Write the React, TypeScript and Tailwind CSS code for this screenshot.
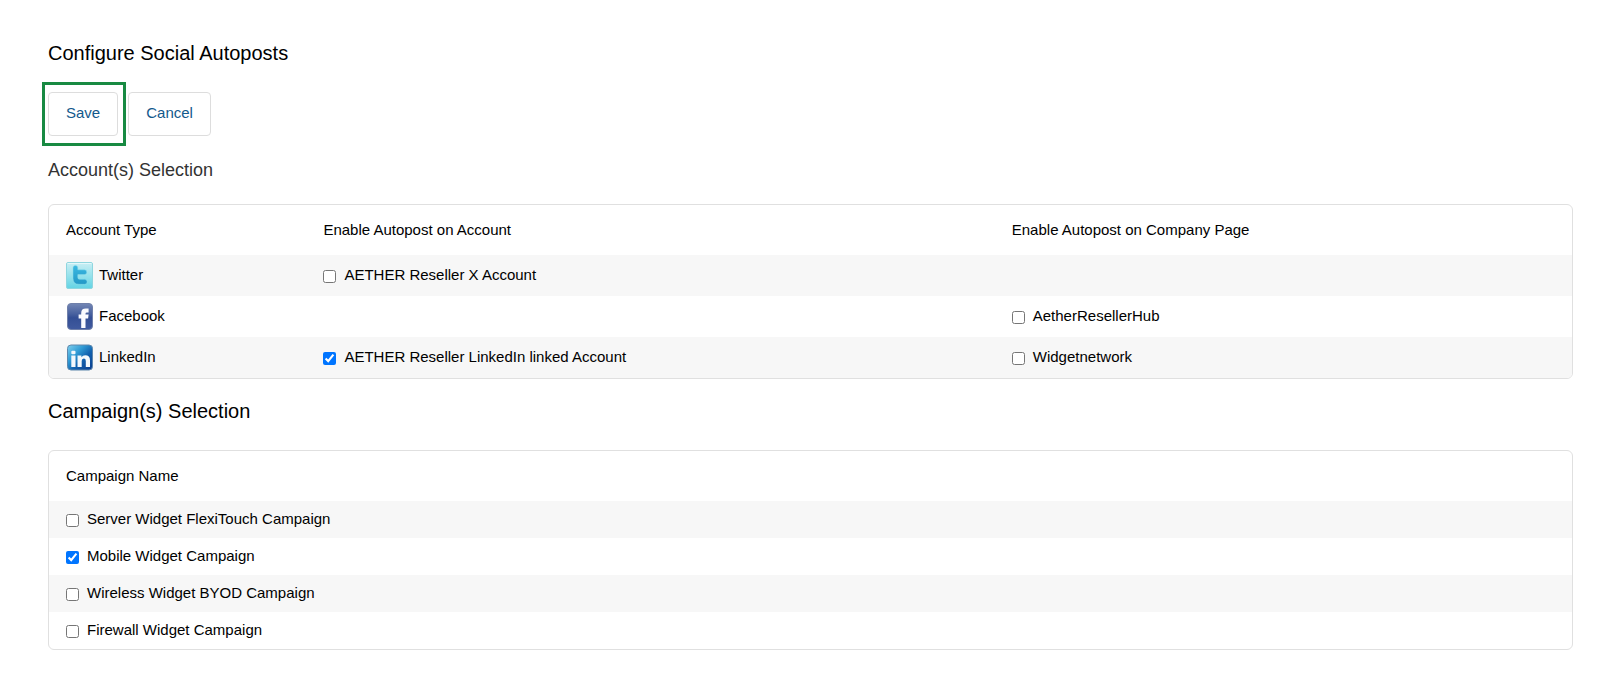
import { useState, type ReactNode } from 'react';

function TwitterIcon() {
  return (
    <svg viewBox="0 0 27 27" className="size-[27px] shrink-0" aria-hidden="true">
      <defs>
        <linearGradient id="tw-bg" x1="0" y1="0" x2="0" y2="1">
          <stop offset="0" stopColor="#c9eef4" />
          <stop offset="0.5" stopColor="#97e2ec" />
          <stop offset="1" stopColor="#62d3e4" />
        </linearGradient>
        <linearGradient id="tw-t" x1="0" y1="0" x2="0" y2="1">
          <stop offset="0" stopColor="#3bb9e2" />
          <stop offset="1" stopColor="#2398c6" />
        </linearGradient>
      </defs>
      <rect x="0.5" y="0.5" width="26" height="26" rx="1.5" fill="url(#tw-bg)" stroke="#8fd6df" />
      <path d="M1.5 1.5h24" stroke="#e3f7fa" />
      <path
        d="M7 5.8Q7 3.400 9.400 3.400Q11.800 3.400 11.800 5.800V7.800H18.400Q20.800 7.800 20.800 10.200Q20.800 12.600 18.400 12.600H11.800V15.400Q11.800 17.300 13.700 17.300H18.600Q21.100 17.300 21.100 19.800Q21.100 22.300 18.600 22.300H13Q7 22.300 7 16.300Z"
        fill="url(#tw-t)"
        stroke="#8bdcea"
        strokeWidth="0.5"
      />
    </svg>
  );
}

function FacebookIcon() {
  return (
    <svg viewBox="0 0 27 27" className="size-[27px] shrink-0" aria-hidden="true">
      <defs>
        <linearGradient id="fb-bg" x1="0" y1="0" x2="0" y2="1">
          <stop offset="0" stopColor="#7487b5" />
          <stop offset="0.4" stopColor="#48619f" />
          <stop offset="0.55" stopColor="#344f95" />
          <stop offset="1" stopColor="#405a9f" />
        </linearGradient>
      </defs>
      <rect x="1.5" y="0.5" width="25" height="26" rx="3.5" fill="url(#fb-bg)" stroke="#7080aa" />
      <path
        d="M15.200 25V15.600H12.600V11.600H15.200V10Q15.200 5.600 19.800 5.600H22.600V9.500H20.900Q19.500 9.500 19.500 10.800V11.600H22.600L22.100 15.600H19.500V25Z"
        fill="#fafbff"
      />
    </svg>
  );
}

function LinkedInIcon() {
  return (
    <svg viewBox="0 0 27 27" className="size-[27px] shrink-0" aria-hidden="true">
      <defs>
        <linearGradient id="li-bg" x1="0" y1="0" x2="1" y2="1">
          <stop offset="0" stopColor="#7fd0ee" />
          <stop offset="0.35" stopColor="#2f9ad4" />
          <stop offset="0.6" stopColor="#1261ae" />
          <stop offset="1" stopColor="#0a3b8c" />
        </linearGradient>
      </defs>
      <rect x="1.5" y="1" width="25" height="25" rx="3.5" fill="url(#li-bg)" stroke="#5f87ac" />
      <rect x="5.300" y="6.800" width="4.200" height="3.400" rx="1" fill="#f3f8fc" />
      <path
        d="M5.300 11.500H9.500V23H5.300ZM11.500 11.500H15.400V13.200Q16.700 11.200 19.200 11.200Q24 11.200 24 16.200V23H19.800V17Q19.800 14.600 17.800 14.600Q15.700 14.600 15.700 17.100V23H11.500Z"
        fill="#f3f8fc"
      />
    </svg>
  );
}

type Option = { id: string; label: string; checked: boolean };

type Account = {
  name: string;
  icon: ReactNode;
  account?: Option;
  page?: Option;
};

const accounts: Account[] = [
  {
    name: 'Twitter',
    icon: <TwitterIcon />,
    account: { id: 'twitter-account', label: 'AETHER Reseller X Account', checked: false },
  },
  {
    name: 'Facebook',
    icon: <FacebookIcon />,
    page: { id: 'facebook-page', label: 'AetherResellerHub', checked: false },
  },
  {
    name: 'LinkedIn',
    icon: <LinkedInIcon />,
    account: { id: 'linkedin-account', label: 'AETHER Reseller LinkedIn linked Account', checked: true },
    page: { id: 'linkedin-page', label: 'Widgetnetwork', checked: false },
  },
];

const campaigns: Option[] = [
  { id: 'server', label: 'Server Widget FlexiTouch Campaign', checked: false },
  { id: 'mobile', label: 'Mobile Widget Campaign', checked: true },
  { id: 'wireless', label: 'Wireless Widget BYOD Campaign', checked: false },
  { id: 'firewall', label: 'Firewall Widget Campaign', checked: false },
];

function CheckOption({ option }: { option: Option }) {
  const [checked, setChecked] = useState(option.checked);
  return (
    <label htmlFor={option.id} className="inline-flex items-center gap-2 align-middle">
      <input
        id={option.id}
        type="checkbox"
        checked={checked}
        onChange={(e) => setChecked(e.target.checked)}
        className="mt-[3px] size-[13px] shrink-0"
      />
      {option.label}
    </label>
  );
}

function Panel({ children }: { children: ReactNode }) {
  return (
    <div className="overflow-hidden rounded-md border border-[#e0e0e0]">
      <table className="w-full text-left">{children}</table>
    </div>
  );
}

export default function App() {
  return (
    <main className="bg-white pt-[39px] pr-[50px] pb-8 pl-12 font-['Liberation_Sans',Arial,sans-serif] text-[15px] leading-5 text-black">
      <h1 className="text-xl leading-7">Configure Social Autoposts</h1>

      <div className="mt-[25px] flex gap-2.5">
        <div className="relative">
          <button type="button" className="h-11 rounded border border-[#dddddd] px-[17px] pb-0.5 text-[#13598c]">
            Save
          </button>
          <span className="pointer-events-none absolute -top-2.5 -right-2 -bottom-2.5 -left-1.5 border-3 border-[#188a42]" />
        </div>
        <button type="button" className="h-11 rounded border border-[#dddddd] px-[17px] pb-0.5 text-[#13598c]">
          Cancel
        </button>
      </div>

      <h2 className="my-5 text-lg leading-7 text-[#333333]">Account(s) Selection</h2>
      <Panel>
        <thead>
          <tr className="h-[50px]">
            <th scope="col" className="w-[16.9%] px-[17px] font-normal">Account Type</th>
            <th scope="col" className="w-[45.2%] px-[17px] font-normal">Enable Autopost on Account</th>
            <th scope="col" className="px-[17px] font-normal">Enable Autopost on Company Page</th>
          </tr>
        </thead>
        <tbody>
          {accounts.map((row) => (
            <tr key={row.name} className="h-[41px] odd:bg-[#f7f7f7]">
              <td className="px-[17px]">
                <div className="flex items-center gap-1.5">
                  {row.icon}
                  <span className="pb-0.5">{row.name}</span>
                </div>
              </td>
              <td className="px-[17px] pb-0.5">{row.account && <CheckOption option={row.account} />}</td>
              <td className="px-[17px] pb-0.5">{row.page && <CheckOption option={row.page} />}</td>
            </tr>
          ))}
        </tbody>
      </Panel>

      <h2 className="mt-[18px] mb-[25px] text-xl leading-7">Campaign(s) Selection</h2>
      <Panel>
        <thead>
          <tr className="h-[50px]">
            <th scope="col" className="px-[17px] font-normal">Campaign Name</th>
          </tr>
        </thead>
        <tbody>
          {campaigns.map((campaign) => (
            <tr key={campaign.id} className="h-[37px] odd:bg-[#f7f7f7]">
              <td className="px-[17px] pb-0.5">
                <CheckOption option={campaign} />
              </td>
            </tr>
          ))}
        </tbody>
      </Panel>
    </main>
  );
}
